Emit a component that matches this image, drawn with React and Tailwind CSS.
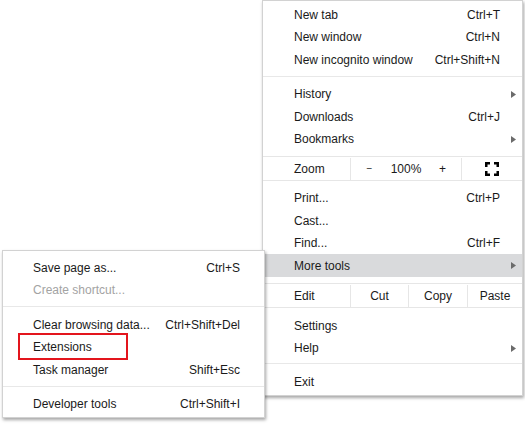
import React from "react";

const font = { fontFamily: '"Liberation Sans", Arial, sans-serif' };

function Arrow() {
  return (
    <svg width="5" height="7" viewBox="0 0 5 7" className="block">
      <path d="M0 0 L5 3.5 L0 7 Z" fill="#6b6b6b" />
    </svg>
  );
}

function Row({ label, shortcut, arrow, highlight, muted }) {
  return (
    <div
      className={`flex h-[22.5px] items-center justify-between pl-[31px] pt-[1px] ${
        arrow ? "pr-[6px]" : "pr-[22px]"
      } ${highlight ? "bg-[#d9dadc]" : ""}`}
    >
      <span className={muted ? "text-[#a3a3a3]" : "text-[#1a1a1a]"}>{label}</span>
      {shortcut && <span className="text-[#1a1a1a]">{shortcut}</span>}
      {arrow && <Arrow />}
    </div>
  );
}

function Sep({ top = 5, bottom = 6 }) {
  return (
    <div style={{ paddingTop: top, paddingBottom: bottom }}>
      <div className="h-px bg-[#e8e8e8]" />
    </div>
  );
}

function Fullscreen() {
  return (
    <svg width="14" height="14" viewBox="0 0 14 14" className="block">
      <g fill="#000">
        <rect x="0" y="0" width="5" height="2.5" />
        <rect x="0" y="0" width="2.5" height="5" />
        <rect x="9" y="0" width="5" height="2.5" />
        <rect x="11.5" y="0" width="2.5" height="5" />
        <rect x="0" y="11.5" width="5" height="2.5" />
        <rect x="0" y="9" width="2.5" height="5" />
        <rect x="9" y="11.5" width="5" height="2.5" />
        <rect x="11.5" y="9" width="2.5" height="5" />
      </g>
    </svg>
  );
}

function SubRow({ label, shortcut, muted, boxed }) {
  return (
    <div className="relative flex h-[22.5px] items-center justify-between pl-[30px] pr-[24px] pt-[1px]">
      <span className={muted ? "text-[#a3a3a3]" : "text-[#1a1a1a]"}>{label}</span>
      {shortcut && <span className="text-[#1a1a1a]">{shortcut}</span>}
      {boxed && (
        <div className="pointer-events-none absolute left-[15px] top-[-2.5px] h-[27px] w-[110px] border-2 border-[#e3151d]" />
      )}
    </div>
  );
}

export default function App() {
  return (
    <div
      className="relative h-[429px] w-[525px] overflow-hidden bg-white text-[12px] leading-none"
      style={font}
    >
      {/* Main menu */}
      <div className="absolute left-[262px] top-0 w-[261px] border border-[#d2d2d2] bg-white pb-[2px] pt-[2px] shadow-[1px_2px_3px_rgba(0,0,0,0.35)]">
        <Row label="New tab" shortcut="Ctrl+T" />
        <Row label="New window" shortcut="Ctrl+N" />
        <Row label="New incognito window" shortcut="Ctrl+Shift+N" />
        <Sep />
        <Row label="History" arrow />
        <Row label="Downloads" shortcut="Ctrl+J" />
        <Row label="Bookmarks" arrow />
        <div className="pt-[6px]" />
        <div className="grid h-[25px] grid-cols-[87px_111px_1fr] border-y border-[#e6e6e6] pt-[1px] text-[#1a1a1a]">
          <div className="flex items-center pl-[31px]">Zoom</div>
          <div className="flex items-center justify-center border-l border-[#e6e6e6]">
            <span className="w-[24px] text-center text-[10px]">−</span>
            <span className="w-[49px] text-center">100%</span>
            <span className="w-[24px] text-center">+</span>
          </div>
          <div className="flex items-center justify-center border-l border-[#e6e6e6]">
            <Fullscreen />
          </div>
        </div>
        <div className="pt-[5.5px]" />
        <Row label="Print..." shortcut="Ctrl+P" />
        <Row label="Cast..." />
        <Row label="Find..." shortcut="Ctrl+F" />
        <Row label="More tools" arrow highlight />
        <div className="pt-[6.5px]" />
        <div className="grid h-[25px] grid-cols-[87px_58px_59px_1fr] border-y border-[#e6e6e6] pt-[1px] text-[#1a1a1a]">
          <div className="flex items-center pl-[31px]">Edit</div>
          <div className="flex items-center justify-center border-l border-[#e6e6e6]">Cut</div>
          <div className="flex items-center justify-center border-l border-[#e6e6e6]">Copy</div>
          <div className="flex items-center justify-center border-l border-[#e6e6e6]">Paste</div>
        </div>
        <div className="pt-[5.75px]" />
        <Row label="Settings" />
        <Row label="Help" arrow />
        <Sep top={4.5} bottom={6.25} />
        <Row label="Exit" />
      </div>

      {/* Sub menu */}
      <div className="absolute left-[2px] top-[250px] w-[263px] border border-[#d2d2d2] bg-white pb-[2px] pt-[5px] shadow-[1px_2px_3px_rgba(0,0,0,0.35)]">
        <SubRow label="Save page as..." shortcut="Ctrl+S" />
        <SubRow label="Create shortcut..." muted />
        <Sep />
        <SubRow label="Clear browsing data..." shortcut="Ctrl+Shift+Del" />
        <SubRow label="Extensions" boxed />
        <SubRow label="Task manager" shortcut="Shift+Esc" />
        <Sep />
        <SubRow label="Developer tools" shortcut="Ctrl+Shift+I" />
      </div>
    </div>
  );
}
